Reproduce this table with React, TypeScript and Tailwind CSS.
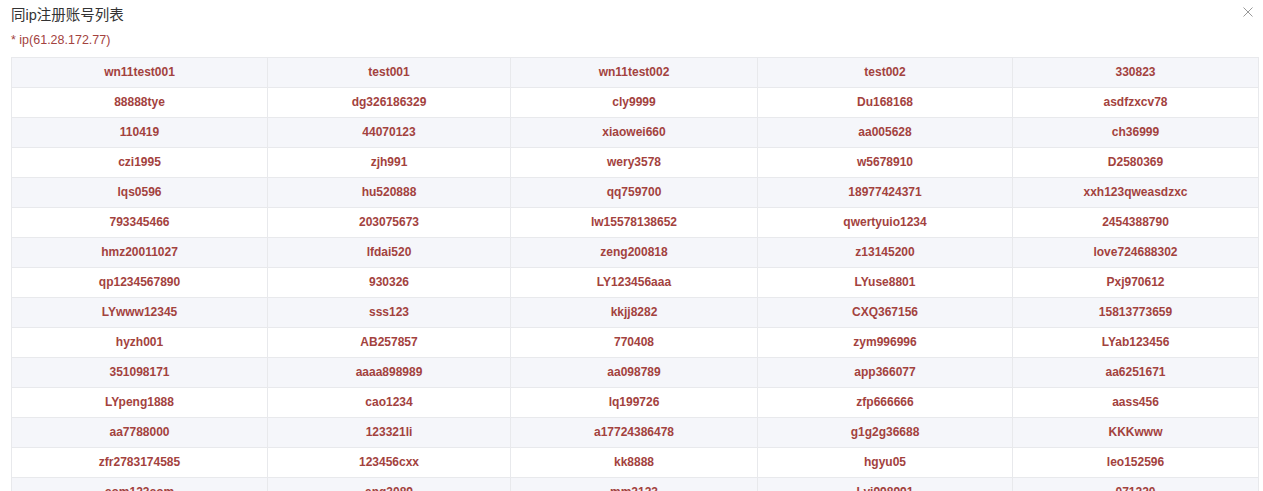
import React from "react";

const rows: string[][] = [
  ["wn11test001", "test001", "wn11test002", "test002", "330823"],
  ["88888tye", "dg326186329", "cly9999", "Du168168", "asdfzxcv78"],
  ["110419", "44070123", "xiaowei660", "aa005628", "ch36999"],
  ["czi1995", "zjh991", "wery3578", "w5678910", "D2580369"],
  ["lqs0596", "hu520888", "qq759700", "18977424371", "xxh123qweasdzxc"],
  ["793345466", "203075673", "lw15578138652", "qwertyuio1234", "2454388790"],
  ["hmz20011027", "lfdai520", "zeng200818", "z13145200", "love724688302"],
  ["qp1234567890", "930326", "LY123456aaa", "LYuse8801", "Pxj970612"],
  ["LYwww12345", "sss123", "kkjj8282", "CXQ367156", "15813773659"],
  ["hyzh001", "AB257857", "770408", "zym996996", "LYab123456"],
  ["351098171", "aaaa898989", "aa098789", "app366077", "aa6251671"],
  ["LYpeng1888", "cao1234", "lq199726", "zfp666666", "aass456"],
  ["aa7788000", "123321li", "a17724386478", "g1g2g36688", "KKKwww"],
  ["zfr2783174585", "123456cxx", "kk8888", "hgyu05", "leo152596"],
  ["com123com", "ang3089", "mm2123", "Lyj998991", "071220"],
];

const colWidths = ["w-[256px]", "w-[243px]", "w-[247px]", "w-[255px]", "w-[246px]"];

export default function App() {
  return (
    <div className="h-[491px] overflow-hidden bg-white font-['Helvetica_Neue','Liberation_Sans','Noto_Sans_CJK_SC',sans-serif]">
      <div className="relative px-[11px] pt-[5px]">
        <div className="text-[14.5px] leading-[20px] text-[#333]">同ip注册账号列表</div>
        {/* close */}
        <button className="absolute right-[10px] top-[7px] text-[#999]" title="关闭">
          <svg width="10" height="10" viewBox="0 0 10 10" fill="none" stroke="currentColor" strokeWidth="1">
            <path d="M0.5 0.5L9.5 9.5M9.5 0.5L0.5 9.5" />
          </svg>
        </button>
        <div className="mt-[6px] text-[12.5px] leading-[18px] text-[#a3423e]">* ip(61.28.172.77)</div>
        <table className="mt-[8px] w-[1247px] table-fixed border-collapse">
          <colgroup>
            {colWidths.map((w, i) => (
              <col key={i} className={w} />
            ))}
          </colgroup>
          <tbody>
            {rows.map((r, i) => (
              <tr key={i} className={i % 2 === 0 ? "bg-[#f5f6fa]" : "bg-white"}>
                {r.map((c, j) => (
                  <td
                    key={j}
                    className="h-[30px] border border-[#e8e9ec] p-0 pb-px text-center text-[12px] font-bold text-[#a3423e]"
                  >
                    {c}
                  </td>
                ))}
              </tr>
            ))}
          </tbody>
        </table>
      </div>
    </div>
  );
}
